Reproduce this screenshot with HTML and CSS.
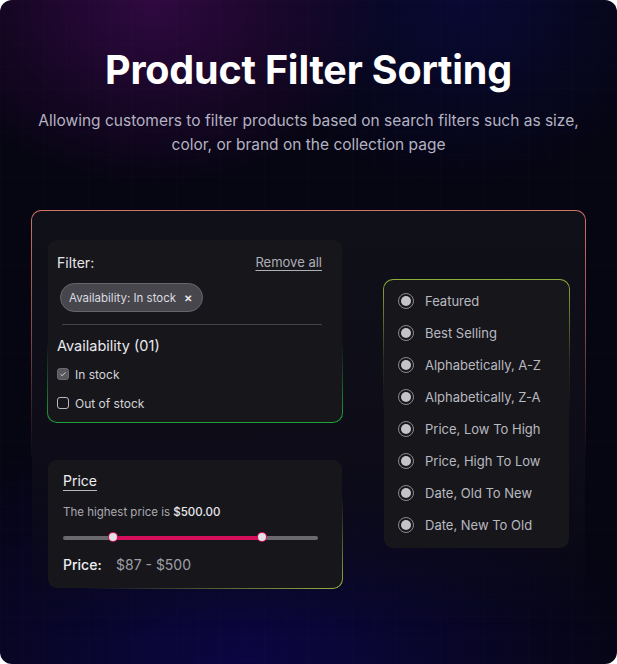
FILE: index.html
```html
<!DOCTYPE html>
<html>
<head>
<meta charset="utf-8">
<link rel="stylesheet" href="styles.css">
</head>
<body>
<div class="page">
  <h1 class="title">Product Filter Sorting</h1>
  <p class="subtitle">Allowing customers to filter products based on search filters such as size,<br>color, or brand on the collection page</p>
  <div class="stage">
    <div class="left">
      <div class="panel filter">
        <div class="filter-head">
          <span class="filter-label">Filter:</span>
          <span class="remove">Remove all</span>
        </div>
        <div class="chip">Availability: In stock <span class="x">✕</span></div>
        <div class="divider"></div>
        <div class="avail">Availability (01)</div>
        <label class="check"><span class="box on"><svg width="8" height="8" viewBox="0 0 8 8"><path d="M1.5 4.2 L3.2 5.8 L6.5 2.3" fill="none" stroke="#cfcfd4" stroke-width="1"/></svg></span>In stock</label>
        <label class="check"><span class="box"></span>Out of stock</label>
      </div>
      <div class="panel price">
        <div class="price-title">Price</div>
        <div class="highest">The highest price is <b>$500.00</b></div>
        <div class="slider">
          <div class="fill"></div>
          <span class="thumb t1"></span>
          <span class="thumb t2"></span>
        </div>
        <div class="range"><span class="range-label">Price:</span><span class="range-val">$87 - $500</span></div>
      </div>
    </div>
    <div class="panel sort">
      <div class="opt"><span class="radio"></span>Featured</div>
      <div class="opt"><span class="radio"></span>Best Selling</div>
      <div class="opt"><span class="radio"></span>Alphabetically, A-Z</div>
      <div class="opt"><span class="radio"></span>Alphabetically, Z-A</div>
      <div class="opt"><span class="radio"></span>Price, Low To High</div>
      <div class="opt"><span class="radio"></span>Price, High To Low</div>
      <div class="opt"><span class="radio"></span>Date, Old To New</div>
      <div class="opt"><span class="radio"></span>Date, New To Old</div>
    </div>
  </div>
</div>
</body>
</html>
```
FILE: styles.css
```css
html, body {
  margin: 0;
  padding: 0;
  background: #ffffff;
}
body {
  font-family: Inter, "Noto Sans", "Liberation Sans", sans-serif;
}
.page {
  width: 617px;
  height: 664px;
  border-radius: 12px;
  overflow: hidden;
  box-sizing: border-box;
  padding-top: 46px;
  background:
    linear-gradient(rgba(255,255,255,0.008) 1px, transparent 1px) 0 0 / 22px 22px,
    linear-gradient(90deg, rgba(255,255,255,0.008) 1px, transparent 1px) 0 0 / 22px 22px,
    radial-gradient(ellipse 55% 40% at 25% 0%, rgba(65,10,85,0.7), transparent 70%),
    radial-gradient(ellipse 50% 40% at 75% 0%, rgba(10,12,75,0.6), transparent 70%),
    radial-gradient(ellipse 75% 45% at 40% 100%, rgba(12,6,75,0.85), transparent 85%),
    #060512;
}
.title {
  margin: 0;
  text-align: center;
  color: #ffffff;
  font-size: 39.5px;
  line-height: 48px;
  font-weight: 700;
  letter-spacing: -0.2px;
}
.subtitle {
  margin: 15px 0 0;
  text-align: center;
  color: #b4b3c2;
  font-size: 15.5px;
  line-height: 24px;
  font-weight: 400;
}
.stage {
  margin: 53px 0 0 31px;
  width: 555px;
  height: 420px;
  box-sizing: border-box;
  border-radius: 10px;
  border: 1px solid transparent;
  background:
    linear-gradient(180deg, #101019 0%, #0d0c18 60%, rgba(10,8,30,0) 100%) padding-box,
    linear-gradient(180deg, #d27468 0%, rgba(210,116,104,0.6) 30%, rgba(210,116,104,0) 60%) border-box;
  display: flex;
  padding: 28px 0 0 15px;
  gap: 40px;
}
.left {
  width: 296px;
  display: flex;
  flex-direction: column;
  gap: 36px;
}
.panel {
  background: #17171b;
  border-radius: 10px;
  box-sizing: border-box;
}
.filter {
  height: 184px;
  padding: 12px 20px 0 9px;
  border: 1px solid transparent;
  background:
    linear-gradient(#17171b, #17171b) padding-box,
    linear-gradient(180deg, rgba(30,160,60,0) 55%, #1fa33c 100%) border-box;
}
.filter-head {
  display: flex;
  justify-content: space-between;
  align-items: center;
  height: 20px;
}
.filter-label {
  color: #e6e6ea;
  font-size: 14px;
  font-weight: 400;
}
.remove {
  color: #aeaeb6;
  font-size: 13px;
  text-decoration: underline;
  text-underline-offset: 3px;
}
.chip {
  display: inline-flex;
  align-items: center;
  margin: 11px 0 0 3px;
  height: 29px;
  box-sizing: border-box;
  padding: 0 10px 0 8px;
  border-radius: 14.5px;
  background: #46464c;
  border: 1px solid #66666c;
  color: #dcdce0;
  font-size: 11.5px;
}
.chip .x {
  margin-left: 8px;
  font-size: 10px;
  color: #e8e8ec;
  font-weight: 700;
}
.divider {
  margin: 12px 0 0 5px;
  height: 1px;
  background: #424247;
}
.avail {
  margin-top: 11px;
  color: #e9e9ee;
  font-size: 14.5px;
  line-height: 20px;
  font-weight: 400;
}
.check {
  display: flex;
  align-items: center;
  color: #d4d4d9;
  font-size: 12px;
  height: 18px;
  margin-top: 9px;
}
.check + .check {
  margin-top: 11px;
}
.box {
  width: 12px;
  height: 12px;
  box-sizing: border-box;
  border: 1px solid #b8b8bf;
  border-radius: 3px;
  margin-right: 6px;
  display: inline-flex;
  align-items: center;
  justify-content: center;
}
.box.on {
  background: #58585e;
  border-color: #6a6a70;
}
.price {
  height: 130px;
  padding: 11px 24px 0 15px;
  border: 1px solid transparent;
  background:
    linear-gradient(#17171b, #17171b) padding-box,
    linear-gradient(160deg, rgba(150,190,60,0) 60%, #97b53a 100%) border-box;
}
.price-title {
  color: #eeeef2;
  font-size: 14px;
  line-height: 20px;
  font-weight: 400;
  text-decoration: underline;
  text-underline-offset: 4px;
  text-decoration-color: #b8b8bd;
}
.highest {
  margin-top: 13px;
  color: #a9a9b0;
  font-size: 11.5px;
  line-height: 16px;
}
.highest b {
  color: #e8e8ec;
  font-weight: 500;
}
.slider {
  position: relative;
  margin-top: 16px;
  height: 4px;
  border-radius: 2px;
  background: #6a6a6e;
}
.fill {
  position: absolute;
  left: 50px;
  width: 149px;
  top: 0;
  height: 4px;
  background: #d50f5b;
}
.thumb {
  position: absolute;
  top: -3px;
  width: 8px;
  height: 8px;
  border-radius: 50%;
  background: #e2e2e6;
  box-shadow: 0 0 0 1px #d50f5b;
  margin-left: -4px;
}
.t1 { left: 50px; }
.t2 { left: 199px; }
.range {
  margin-top: 15px;
  display: flex;
  align-items: center;
  font-size: 14px;
  line-height: 20px;
}
.range-label {
  color: #eeeef2;
  font-weight: 500;
  width: 53px;
}
.range-val {
  color: #9e9ea6;
}
.sort {
  margin-top: 40px;
  width: 187px;
  height: 270px;
  padding: 11px 0 0 14px;
  border: 1px solid transparent;
  background:
    linear-gradient(#17171b, #17171b) padding-box,
    linear-gradient(180deg, #8fae3a 0%, rgba(140,175,60,0.2) 30%, rgba(140,175,60,0) 50%) border-box;
  display: flex;
  flex-direction: column;
}
.opt {
  display: flex;
  align-items: center;
  height: 20px;
  margin-bottom: 12px;
  color: #b9b9c0;
  font-size: 13px;
}
.radio {
  width: 16px;
  height: 16px;
  box-sizing: border-box;
  border-radius: 50%;
  border: 1px solid #8a8a90;
  margin-right: 11px;
  position: relative;
  flex-shrink: 0;
}
.radio::after {
  content: "";
  position: absolute;
  left: 2px;
  top: 2px;
  width: 10px;
  height: 10px;
  border-radius: 50%;
  background: #c4c4c8;
}
```
